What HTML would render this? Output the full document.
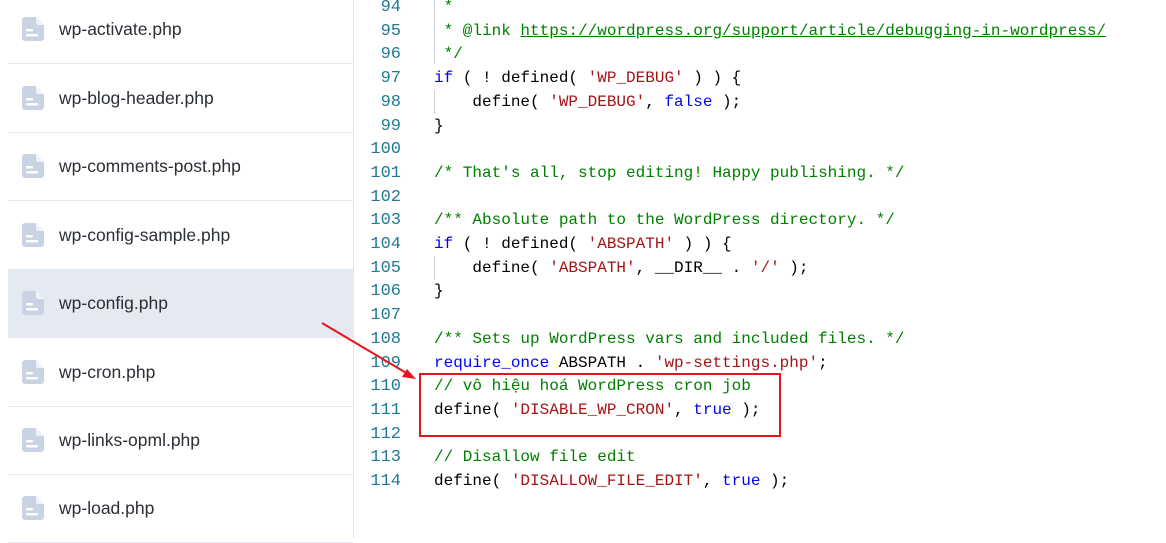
<!DOCTYPE html>
<html><head><meta charset="utf-8"><style>
body{margin:0;width:1166px;height:538px;overflow:hidden;background:#fff;position:relative;font-family:"Liberation Sans",sans-serif}
.side{position:absolute;left:0;top:0;width:353px;height:538px;border-right:1px solid #e3e8ef}
.row{position:absolute;left:8px;width:345px;height:68px;border-bottom:1px solid #e3e8ef}
.row.sel{background:#e4e9f2}
.row svg{position:absolute;left:14px;top:22px}
.row span{position:absolute;left:51px;top:0;line-height:68px;font-size:17.5px;color:#2b2f36}
.code{position:absolute;left:0;top:-4px;font-family:"Liberation Mono",monospace;font-size:16px;line-height:23.7px;white-space:pre;color:#000}
.ln{position:absolute;left:360px;width:41px;text-align:right;color:#237893;font-size:17px}
.tx{position:absolute;left:434px}
.c{color:#008000}.k{color:#0000ff}.s{color:#a31515}
.guide{position:absolute;left:434px;width:1px;background:#d3d3d3}
</style></head><body>
<div class="side">
<div class="row" style="top:-5px"><svg width="22" height="24" viewBox="0 0 22 24"><path d="M3 0h11l8 8v13a3 3 0 0 1-3 3H3a3 3 0 0 1-3-3V3a3 3 0 0 1 3-3z" fill="#c9d3e3"/><path d="M14 0v6a2 2 0 0 0 2 2h6" fill="#fff" opacity=".7"/><rect x="4" y="12" width="7" height="2.5" rx="1" fill="#fff"/><rect x="4" y="17" width="12" height="2.5" rx="1" fill="#fff"/></svg><span>wp-activate.php</span></div>
<div class="row" style="top:64px"><svg width="22" height="24" viewBox="0 0 22 24"><path d="M3 0h11l8 8v13a3 3 0 0 1-3 3H3a3 3 0 0 1-3-3V3a3 3 0 0 1 3-3z" fill="#c9d3e3"/><path d="M14 0v6a2 2 0 0 0 2 2h6" fill="#fff" opacity=".7"/><rect x="4" y="12" width="7" height="2.5" rx="1" fill="#fff"/><rect x="4" y="17" width="12" height="2.5" rx="1" fill="#fff"/></svg><span>wp-blog-header.php</span></div>
<div class="row" style="top:132px"><svg width="22" height="24" viewBox="0 0 22 24"><path d="M3 0h11l8 8v13a3 3 0 0 1-3 3H3a3 3 0 0 1-3-3V3a3 3 0 0 1 3-3z" fill="#c9d3e3"/><path d="M14 0v6a2 2 0 0 0 2 2h6" fill="#fff" opacity=".7"/><rect x="4" y="12" width="7" height="2.5" rx="1" fill="#fff"/><rect x="4" y="17" width="12" height="2.5" rx="1" fill="#fff"/></svg><span>wp-comments-post.php</span></div>
<div class="row" style="top:201px"><svg width="22" height="24" viewBox="0 0 22 24"><path d="M3 0h11l8 8v13a3 3 0 0 1-3 3H3a3 3 0 0 1-3-3V3a3 3 0 0 1 3-3z" fill="#c9d3e3"/><path d="M14 0v6a2 2 0 0 0 2 2h6" fill="#fff" opacity=".7"/><rect x="4" y="12" width="7" height="2.5" rx="1" fill="#fff"/><rect x="4" y="17" width="12" height="2.5" rx="1" fill="#fff"/></svg><span>wp-config-sample.php</span></div>
<div class="row sel" style="top:269px"><svg width="22" height="24" viewBox="0 0 22 24"><path d="M3 0h11l8 8v13a3 3 0 0 1-3 3H3a3 3 0 0 1-3-3V3a3 3 0 0 1 3-3z" fill="#c9d3e3"/><path d="M14 0v6a2 2 0 0 0 2 2h6" fill="#fff" opacity=".7"/><rect x="4" y="12" width="7" height="2.5" rx="1" fill="#fff"/><rect x="4" y="17" width="12" height="2.5" rx="1" fill="#fff"/></svg><span>wp-config.php</span></div>
<div class="row" style="top:338px"><svg width="22" height="24" viewBox="0 0 22 24"><path d="M3 0h11l8 8v13a3 3 0 0 1-3 3H3a3 3 0 0 1-3-3V3a3 3 0 0 1 3-3z" fill="#c9d3e3"/><path d="M14 0v6a2 2 0 0 0 2 2h6" fill="#fff" opacity=".7"/><rect x="4" y="12" width="7" height="2.5" rx="1" fill="#fff"/><rect x="4" y="17" width="12" height="2.5" rx="1" fill="#fff"/></svg><span>wp-cron.php</span></div>
<div class="row" style="top:406px"><svg width="22" height="24" viewBox="0 0 22 24"><path d="M3 0h11l8 8v13a3 3 0 0 1-3 3H3a3 3 0 0 1-3-3V3a3 3 0 0 1 3-3z" fill="#c9d3e3"/><path d="M14 0v6a2 2 0 0 0 2 2h6" fill="#fff" opacity=".7"/><rect x="4" y="12" width="7" height="2.5" rx="1" fill="#fff"/><rect x="4" y="17" width="12" height="2.5" rx="1" fill="#fff"/></svg><span>wp-links-opml.php</span></div>
<div class="row" style="top:474px"><svg width="22" height="24" viewBox="0 0 22 24"><path d="M3 0h11l8 8v13a3 3 0 0 1-3 3H3a3 3 0 0 1-3-3V3a3 3 0 0 1 3-3z" fill="#c9d3e3"/><path d="M14 0v6a2 2 0 0 0 2 2h6" fill="#fff" opacity=".7"/><rect x="4" y="12" width="7" height="2.5" rx="1" fill="#fff"/><rect x="4" y="17" width="12" height="2.5" rx="1" fill="#fff"/></svg><span>wp-load.php</span></div>
</div>

<div class="guide" style="top:0;height:64px"></div>
<div class="guide" style="top:90px;height:24px"></div>
<div class="guide" style="top:256px;height:24px"></div>

<div class="code">
<div class="ln" style="top:0px">94</div><div class="tx c" style="top:0px"> *</div>
<div class="ln" style="top:23.7px">95</div><div class="tx c" style="top:23.7px"> * @link <u>https://wordpress.org/support/article/debugging-in-wordpress/</u></div>
<div class="ln" style="top:47.4px">96</div><div class="tx c" style="top:47.4px"> */</div>
<div class="ln" style="top:71.1px">97</div><div class="tx" style="top:71.1px"><span class="k">if</span> ( ! defined( <span class="s">'WP_DEBUG'</span> ) ) {</div>
<div class="ln" style="top:94.8px">98</div><div class="tx" style="top:94.8px">    define( <span class="s">'WP_DEBUG'</span>, <span class="k">false</span> );</div>
<div class="ln" style="top:118.5px">99</div><div class="tx" style="top:118.5px">}</div>
<div class="ln" style="top:142.2px">100</div>
<div class="ln" style="top:165.9px">101</div><div class="tx c" style="top:165.9px">/* That's all, stop editing! Happy publishing. */</div>
<div class="ln" style="top:189.6px">102</div>
<div class="ln" style="top:213.3px">103</div><div class="tx c" style="top:213.3px">/** Absolute path to the WordPress directory. */</div>
<div class="ln" style="top:237px">104</div><div class="tx" style="top:237px"><span class="k">if</span> ( ! defined( <span class="s">'ABSPATH'</span> ) ) {</div>
<div class="ln" style="top:260.7px">105</div><div class="tx" style="top:260.7px">    define( <span class="s">'ABSPATH'</span>, __DIR__ . <span class="s">'/'</span> );</div>
<div class="ln" style="top:284.4px">106</div><div class="tx" style="top:284.4px">}</div>
<div class="ln" style="top:308.1px">107</div>
<div class="ln" style="top:331.8px">108</div><div class="tx c" style="top:331.8px">/** Sets up WordPress vars and included files. */</div>
<div class="ln" style="top:355.5px">109</div><div class="tx" style="top:355.5px"><span class="k">require_once</span> ABSPATH . <span class="s">'wp-settings.php'</span>;</div>
<div class="ln" style="top:379.2px">110</div><div class="tx c" style="top:379.2px">// vô hiệu hoá WordPress cron job</div>
<div class="ln" style="top:402.9px">111</div><div class="tx" style="top:402.9px">define( <span class="s">'DISABLE_WP_CRON'</span>, <span class="k">true</span> );</div>
<div class="ln" style="top:426.6px">112</div>
<div class="ln" style="top:450.3px">113</div><div class="tx c" style="top:450.3px">// Disallow file edit</div>
<div class="ln" style="top:474px">114</div><div class="tx" style="top:474px">define( <span class="s">'DISALLOW_FILE_EDIT'</span>, <span class="k">true</span> );</div>
</div>

<div style="position:absolute;left:419px;top:373px;width:358px;height:60px;border:2px solid #e8141b"></div>
<svg style="position:absolute;left:0;top:0" width="1166" height="538"><line x1="322" y1="323" x2="408" y2="374" stroke="#e8141b" stroke-width="2"/><path d="M416 379 L402 377 L407 369 Z" fill="#e8141b"/></svg>
</body></html>
